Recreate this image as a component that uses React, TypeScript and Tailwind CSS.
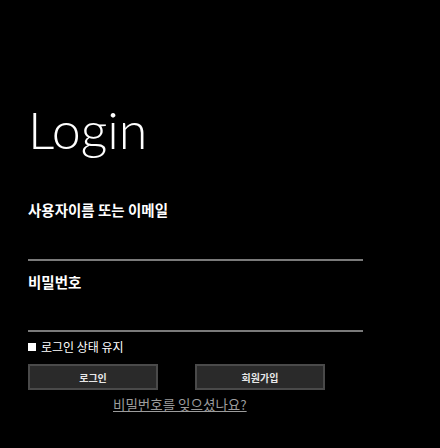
export default function App() {
  const kr = { fontFamily: '"Noto Sans CJK KR", "Noto Sans", sans-serif' };
  return (
    <div className="min-h-[448px] w-[440px] bg-black pl-[28px] pt-[97px] text-white" style={kr}>
      <h1 className="text-[52px] font-light leading-[64px] text-white" style={{ fontFamily: 'Lato, "Open Sans", sans-serif' }}>
        Login
      </h1>
      <div className="mt-[39px]">
        <label className="block text-[14.5px] font-bold leading-[20px]">사용자이름 또는 이메일</label>
        <div className="h-[41px] w-[335px] border-b-2 border-[#7a7a7a]" />
      </div>
      <div className="mt-[11px]">
        <label className="block text-[14.5px] font-bold leading-[20px]">비밀번호</label>
        <div className="h-[40px] w-[335px] border-b-2 border-[#7a7a7a]" />
      </div>
      <div className="mt-[7px] flex items-center gap-[5px] text-[12px] leading-[16px]">
        <span className="h-[8px] w-[8px] bg-white" />
        <span>로그인 상태 유지</span>
      </div>
      <div className="mt-[9px] flex gap-[37px]">
        <button className="h-[26px] w-[130px] border-2 border-[#4a4a4a] bg-[#2a2a2a] text-[10px] font-bold text-[#e8e8e8]">
          로그인
        </button>
        <button className="h-[26px] w-[130px] border-2 border-[#4a4a4a] bg-[#2a2a2a] text-[10px] font-bold text-[#e8e8e8]">
          회원가입
        </button>
      </div>
      <a href="#" className="ml-[85px] mt-[5px] inline-block text-[13.5px] leading-[18px] text-[#9c9c9c] underline">
        비밀번호를 잊으셨나요?
      </a>
    </div>
  );
}
